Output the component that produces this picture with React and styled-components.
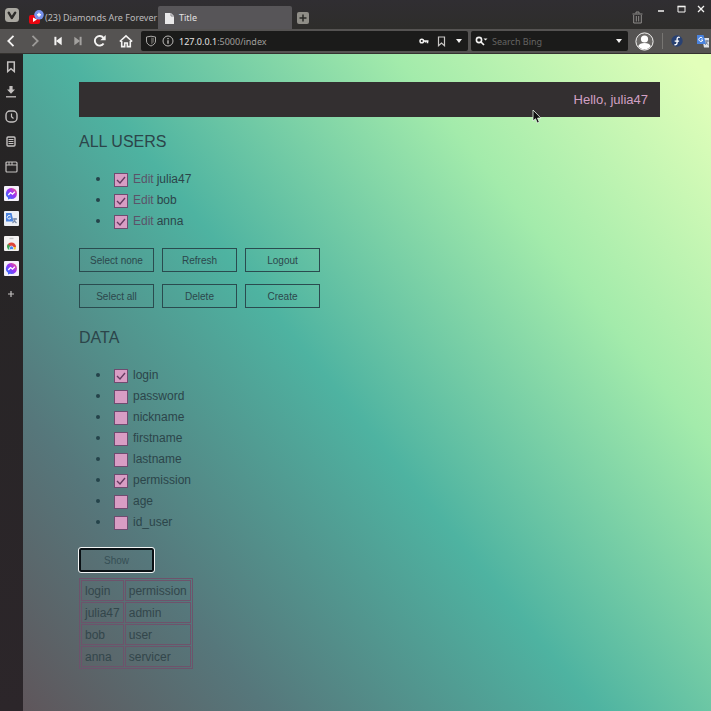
import React, { useState } from "react";
import styled, { createGlobalStyle, css } from "styled-components";

const GlobalStyle = createGlobalStyle`
  *, *::before, *::after { box-sizing: border-box; }
  body { margin: 0; background: #2b292c; }
  button, input { font: inherit; color: inherit; }
`;

const Browser = styled.div`
  display: flex;
  flex-direction: column;
  min-height: 100vh;
  overflow: hidden;
  font-family: "Noto Sans", sans-serif;
  font-size: 9px;
  color: #d8d6d4;
`;

const TabStrip = styled.header`
  display: flex;
  align-items: flex-end;
  height: 29px;
  background: linear-gradient(#302e32, #2e2d2b);
`;

const IconButton = styled.button`
  display: flex;
  flex: none;
  align-items: center;
  justify-content: center;
  width: ${(p) => p.$w || 22}px;
  height: ${(p) => p.$h || 22}px;
  padding: 0;
  border: 0;
  background: none;
  color: ${(p) => p.$color || "#f4f3f2"};
  svg { display: block; flex: none; }
`;

const Tab = styled.button`
  display: flex;
  align-items: center;
  gap: ${(p) => (p.$active ? 4 : 1)}px;
  width: 134px;
  height: 23px;
  padding: 0 ${(p) => (p.$active ? 6 : 5)}px;
  border: 0;
  border-radius: 2px 2px 0 0;
  background: ${(p) => (p.$active ? "#575558" : "transparent")};
  color: ${(p) => (p.$active ? "#e3e1e2" : "#bdbbbc")};
  white-space: nowrap;
  text-align: left;
  svg { flex: none; }
`;

const TabTitle = styled.span`
  flex: 1;
`;

const StripEnd = styled.div`
  display: flex;
  align-self: stretch;
  margin-left: auto;
  align-items: flex-start;
`;

const TrashSlot = styled.div`
  padding: 6px 3px 0 0;
`;

const Toolbar = styled.nav`
  display: flex;
  align-items: center;
  height: 25px;
  border-bottom: 1px solid #34322f;
  background: #555352;
`;

const NavGroup = styled.div`
  display: flex;
  flex: none;
  width: 141px;
`;

const Field = styled.div`
  display: flex;
  align-items: center;
  height: 20px;
  border-radius: 2px;
  background: #1b1b1a;
  min-width: 0;
  ${(p) => (p.$wide ? css`flex: 1;` : css`flex: none; width: 157px; margin-left: 3px;`)}
`;

const FieldInput = styled.input`
  flex: 1;
  min-width: 0;
  padding: 0 0 0 1px;
  border: 0;
  outline: 0;
  background: none;
  color: #a9a7a5;
  &::placeholder { color: #656462; opacity: 1; }
`;

const Address = styled.button`
  flex: 1;
  padding: 0 0 0 4px;
  border: 0;
  background: none;
  text-align: left;
  font-size: 9px;
  color: #a09e9b;
  b { font-weight: 400; color: #e6e4e2; }
`;

const Extensions = styled.div`
  display: flex;
  flex: none;
  align-items: center;
  width: 83px;
  overflow: hidden;
`;

const Divider = styled.span`
  flex: none;
  width: 1px;
  height: 16px;
  margin: 0 1px 0 2px;
  background: #777572;
`;

const Main = styled.div`
  display: flex;
  flex: 1;
`;

const Sidebar = styled.aside`
  display: flex;
  flex: none;
  flex-direction: column;
  gap: 2px;
  width: 23px;
  background: linear-gradient(#252424, #2c262a);
`;

const PanelGroup = styled.div`
  display: flex;
  flex-direction: column;
`;

const Page = styled.main`
  flex: 1;
  min-width: 0;
  padding: 28px 51px 40px 56px;
  font-family: "Liberation Sans", Arial, sans-serif;
  font-size: 12px;
  color: #2c454a;
  background: linear-gradient(51deg, #5f565b 0%, #56777b 20%, #4eb3a1 47%, #a3ebab 74%, #e2ffba 98%);
`;

const Greeting = styled.div`
  display: flex;
  align-items: center;
  justify-content: flex-end;
  height: 35px;
  padding: 0 12px;
  background: #332f30;
  color: #d2a0c4;
  font-size: 13px;
`;

const Heading = styled.h1`
  margin: ${(p) => p.$top}px 0 0;
  font-size: 16px;
  font-weight: 400;
  line-height: 20px;
`;

const CheckList = styled.ul`
  margin: 16px 0;
  padding: 0 0 0 35px;
  list-style: none;
`;

const CheckItem = styled.li`
  display: flex;
  align-items: center;
  height: 21px;
  &::before {
    content: "";
    width: 4px;
    height: 4px;
    margin-left: -18px;
    margin-right: 14px;
    border-radius: 50%;
    background: #24434a;
  }
`;

const Box = styled.input`
  appearance: none;
  flex: none;
  width: 14px;
  height: 14px;
  margin: 2px 5px 0 0;
  border: 1px solid #6f4b70;
  background: #d89dc4;
  &:checked {
    background: #d89dc4 url("data:image/svg+xml,%3Csvg xmlns='http://www.w3.org/2000/svg' viewBox='0 0 12 12'%3E%3Cpath d='M2 6l3 3 5-6' fill='none' stroke='%23663c62' stroke-width='1.4'/%3E%3C/svg%3E");
  }
`;

const EditLink = styled.a`
  margin-right: 3px;
  color: #5b5369;
  text-decoration: none;
`;

const Actions = styled.div`
  display: grid;
  grid-template-columns: repeat(3, 75px);
  gap: 12px 8px;
  padding-top: 1px;
`;

const ActionButton = styled.button`
  display: block;
  width: 75px;
  height: 24px;
  padding: 0;
  border: 1px solid #2a4b4f;
  background: none;
  color: #2c474c;
  font-size: 10px;
  ${(p) => p.$focused && css`
    border: 2px solid #0a1014;
    border-radius: 2px;
    outline: 1px solid #f3f5f5;
    color: #364f55;
  `}
`;

const ResultTable = styled.table`
  margin-top: 6px;
  border: 1px solid #6d536b;
  border-spacing: 1px;
  color: #33464b;
  th, td {
    height: 21px;
    padding: 0 3px;
    border: 1px solid #6d536b;
    font-weight: 400;
    text-align: left;
  }
`;

const Pointer = styled.svg`
  position: absolute;
  left: 532px;
  top: 109px;
`;

const Svg = ({ w = 14, h = w, vb = `0 0 ${w} ${h}`, children, ...rest }) => (
  <svg width={w} height={h} viewBox={vb} fill="none" stroke="currentColor" strokeWidth="1.4" aria-hidden="true" {...rest}>
    {children}
  </svg>
);

const Vivaldi = () => (
  <Svg>
    <rect width="14" height="14" rx="3.5" fill="#aaa8a1" stroke="none" />
    <path d="M3.7 4.7l3.1 5.3 3.4-5.3" stroke="#2d2c2a" strokeWidth="2.4" strokeLinecap="round" strokeLinejoin="round" />
  </Svg>
);
const YouTube = () => (
  <Svg w={15} h={16} stroke="none">
    <rect x="0" y="5" width="11" height="9" rx="2" fill="#e80510" />
    <path d="M4 7.5l4 2-4 2.500z" fill="#fff" />
    <circle cx="10" cy="4.800" r="4.8" fill="#7893ee" />
    <path d="M8 4.800h4M10 2.800v4" stroke="#fff" />
  </Svg>
);
const FileIcon = () => (
  <Svg w={11} h={12} stroke="none">
    <path d="M1 1h6l3 3v8H1z" fill="#e9e8e9" />
    <path d="M7 1v3h3" stroke="#88868a" strokeWidth="1" />
  </Svg>
);
const PlusTab = () => (
  <Svg w={12}>
    <rect width="12" height="12" rx="2" fill="#8f8d87" stroke="none" />
    <path d="M6 2.5v7M2.5 6h7" stroke="#292826" strokeWidth="1.5" />
  </Svg>
);
const Trash = () => (
  <Svg w={11} h={13}>
    <path d="M.5 3h10M4 2.500V1h3v1.500M1.700 4v8h7.600V4M4.300 5v5.500M6.700 5v5.500" strokeWidth="1" />
  </Svg>
);
const Back = () => <Svg w={12}><path d="M8.5 .8L3.300 6l5.200 5.200" strokeWidth="1.8" /></Svg>;
const Forward = () => <Svg w={12}><path d="M3.5 .8L8.700 6l-5.200 5.200" strokeWidth="1.8" /></Svg>;
const Rewind = () => <Svg w={8} h={10}><path d="M1.4 .8v8.400" strokeWidth="2" /><path d="M7.7 .8v8.400L2 5z" fill="currentColor" stroke="none" /></Svg>;
const FastForward = () => <Svg w={8} h={10}><path d="M6.600 .8v8.400" strokeWidth="2" /><path d="M.3 .8v8.400L6 5z" fill="currentColor" stroke="none" /></Svg>;
const Reload = () => <Svg w={14}><path d="M10.6 9.5A4.8 4.8 0 1 1 10.4 3.8" strokeWidth="1.9" /><path d="M12.7 1v5.300H7.300z" fill="currentColor" stroke="none" /></Svg>;
const Home = () => <Svg w={14}><path d="M.8 7.500L7 1.800l6.200 5.700M2.700 7v5.600h3V9h2.600v3.600h3V7" strokeWidth="1.6" /></Svg>;
const Shield = () => <Svg w={12}><path d="M1.500 2l4.500-.8 4.500.8v4c0 2.500-2 4-4.500 5-2.500-1-4.500-2.500-4.500-5z" strokeWidth="1" /><path d="M6 2.500l3 .6v3c0 1.600-1.300 2.600-3 3.400z" fill="#555451" stroke="none" /></Svg>;
const Info = () => <Svg w={12}><circle cx="6" cy="6" r="5" strokeWidth="1" /><path d="M6 5.200v3.600M6 2.900v1.300" strokeWidth="1.400" /></Svg>;
const Key = () => <Svg w={10} h={8}><circle cx="2.800" cy="4" r="1.800" strokeWidth="1.500" /><path d="M4.500 4H9.500M8.500 4v2.300M6.500 4v1.500" strokeWidth="1.500" /></Svg>;
const Bookmark = () => <Svg w={9} h={11}><path d="M1.500 1h6v8.700L4.500 7l-3 2.700z" strokeWidth="1.200" /></Svg>;
const BookmarkPanel = () => <Svg w={10} h={12}><path d="M1.700 1h6.600v9.500L5 7.700l-3.300 2.800z" strokeWidth="1.500" /></Svg>;
const Caret = () => <Svg w={6} h={4}><path d="M0 0h6L3 4z" fill="currentColor" stroke="none" /></Svg>;
const SearchIcon = () => <Svg w={13} h={10}><circle cx="4" cy="4" r="2.600" strokeWidth="1.600" /><path d="M6 6l3 3" strokeWidth="1.700" /><path d="M8.500 2.500h4l-2 2z" fill="currentColor" stroke="none" /></Svg>;
const Avatar = () => (
  <Svg w={19}>
    <circle cx="9.500" cy="9.500" r="8.600" strokeWidth="1" fill="#6b6967" />
    <circle cx="9.500" cy="7" r="3.600" fill="#fff" stroke="none" />
    <path d="M3.200 14.300c1-2.400 3-3.300 6.300-3.300s5.300.9 6.300 3.300a8 8 0 0 1-12.600 0z" fill="#fff" stroke="none" />
  </Svg>
);
const Fedora = () => (
  <Svg w={12}>
    <circle cx="6" cy="6" r="5.700" fill="#294172" stroke="none" />
    <path d="M8.800 2.500C7 1.700 6.200 2.700 6.100 4v3.600C6 9.500 4.700 10 3.400 9.600M3.700 6.100h4.400" stroke="#fff" strokeWidth="1.300" />
  </Svg>
);
const Translate = () => (
  <Svg w={14} stroke="none">
    <path d="M6 4h7v9.500H8z" fill="#dfe3ea" />
    <path d="M1 1h6.500l2.500 9H1z" fill="#4a83df" />
    <path d="M6.500 4.300A2 2 0 1 0 6.800 6H5" stroke="#fff" strokeWidth="1" />
    <path d="M9 7h4M11 6v1c0 2-1 3-2 4M10 8c.5 1.500 1.500 2.300 2.500 3" stroke="#65758e" strokeWidth=".9" />
  </Svg>
);
const Download = () => <Svg w={12} h={13}><path d="M1 11.800h10" strokeWidth="1.300" /><path d="M4.400 1h3.200v3.500H10L6 8.700 2 4.500h2.400z" fill="currentColor" stroke="none" /></Svg>;
const Clock = () => <Svg w={13}><rect x="1" y="1" width="11" height="11" rx="4" strokeWidth="1.400" /><path d="M6.500 3.500v3.200l2 1.800" strokeWidth="1.200" /></Svg>;
const Notes = () => <Svg w={10} h={11}><rect x="1" y="1" width="8" height="9" rx="1" strokeWidth="1.400" /><path d="M2.500 3.500h5M2.500 5.500h5M2.500 7.500h5" strokeWidth="1" /></Svg>;
const WindowIcon = () => <Svg w={13} h={12}><rect x="1" y="1" width="11" height="10" rx="1" strokeWidth="1.200" /><path d="M1 4h11M4 1v3M7 1v3" strokeWidth="1" /></Svg>;
const Messenger = () => (
  <Svg w={15} stroke="none">
    <defs>
      <linearGradient id="messenger" x1="0" y1="1" x2="1" y2="0">
        <stop stopColor="#167dff" /><stop offset=".55" stopColor="#9b32f5" /><stop offset="1" stopColor="#ff5a78" />
      </linearGradient>
    </defs>
    <rect width="15" height="15" rx="1" fill="#f5f1fa" />
    <path d="M7.500 2a5.500 5.500 0 0 1 0 11l-1.500-.2L4 13.500v-1.700A5.500 5.500 0 0 1 7.500 2z" fill="url(#messenger)" />
    <path d="M4.300 9l2.200-2.400 2 1.500 2.300-2.300" stroke="#fff" strokeWidth="1.300" />
  </Svg>
);
const TranslateTile = () => (
  <Svg w={15} stroke="none">
    <rect width="15" height="15" rx="1" fill="#eceff5" />
    <path d="M2 2h5.500l2 8.500H2z" fill="#4a83df" />
    <path d="M6.500 5A1.800 1.800 0 1 0 6.800 7H5.300" stroke="#fff" strokeWidth=".9" />
    <path d="M8.500 8h4.500M11 7v1c0 2-1 3-2.500 4M10 9c.5 1.500 1.500 2.300 2.500 3" stroke="#7b8dab" />
  </Svg>
);
const ChromeTile = () => (
  <Svg w={15} stroke="none">
    <rect width="15" height="15" rx="1" fill="#f3f1f1" />
    <path d="M5.500 2.500h4" stroke="#c5c5c5" />
    <path d="M3 11a4.500 4.500 0 0 1 9 0z" fill="#de4336" />
    <path d="M3 11c0-1.500.5-2.400 1-3l3 3v2.500H4z" fill="#39a657" />
    <path d="M8 13.500V11h4l-.5 2.500z" fill="#f5c933" />
    <path d="M5.500 12a2 2 0 0 1 4 0v1.500h-4z" fill="#4285f4" stroke="#fff" strokeWidth=".6" />
  </Svg>
);
const Plus = () => <Svg w={8}><path d="M4 1v6M1 4h6" strokeWidth="1.200" /></Svg>;
const Minimize = () => <Svg w={8}><path d="M1 6h6" strokeWidth="1.500" /></Svg>;
const Maximize = () => <Svg w={9} h={8}><path d="M1 1.500h7v5.500H1z" strokeWidth="1" /><path d="M.5 1.500h8" strokeWidth="1.600" /></Svg>;
const Close = () => <Svg w={8}><path d="M1 1l6 6M7 1L1 7" strokeWidth="1.300" /></Svg>;

const panelGroups = [
  [["Bookmarks", BookmarkPanel], ["Downloads", Download], ["History", Clock], ["Notes", Notes], ["Window", WindowIcon]],
  [["Messenger", Messenger], ["Translate", TranslateTile], ["Web store", ChromeTile], ["Messenger chats", Messenger], ["Add panel", Plus]],
];
const users = ["julia47", "bob", "anna"];
const fields = ["login", "password", "nickname", "firstname", "lastname", "permission", "age", "id_user"];
const rows = [["julia47", "admin"], ["bob", "user"], ["anna", "servicer"]];

function CheckRow({ id, name, editable, checked, onToggle }) {
  return (
    <CheckItem>
      <Box type="checkbox" id={id} checked={checked} onChange={onToggle} />
      {editable && <EditLink href="#edit">Edit</EditLink>}
      <label htmlFor={id}>{name}</label>
    </CheckItem>
  );
}

export default function App() {
  const [pickedUsers, setPickedUsers] = useState(users);
  const [pickedFields, setPickedFields] = useState(["login", "permission"]);
  const toggle = (list, item) => (list.includes(item) ? list.filter((x) => x !== item) : [...list, item]);

  return (
    <>
      <GlobalStyle />
      <Browser>
        <TabStrip>
          <IconButton $w={24} $h={29} aria-label="Menu"><Vivaldi /></IconButton>
          <Tab><YouTube /><TabTitle>(23) Diamonds Are Forever</TabTitle></Tab>
          <Tab $active><FileIcon /><TabTitle>Title</TabTitle></Tab>
          <IconButton $w={22} $h={23} aria-label="New tab"><PlusTab /></IconButton>
          <StripEnd>
            <TrashSlot><IconButton $color="#8f8d8b" aria-label="Closed tabs"><Trash /></IconButton></TrashSlot>
            <IconButton $w={20} $h={17} aria-label="Minimize"><Minimize /></IconButton>
            <IconButton $w={20} $h={17} aria-label="Maximize"><Maximize /></IconButton>
            <IconButton $w={20} $h={17} aria-label="Close"><Close /></IconButton>
          </StripEnd>
        </TabStrip>

        <Toolbar>
          <NavGroup>
            <IconButton $w={22} aria-label="Back"><Back /></IconButton>
            <IconButton $w={26} $color="#9c9a98" aria-label="Forward"><Forward /></IconButton>
            <IconButton $w={20} aria-label="Rewind"><Rewind /></IconButton>
            <IconButton $w={20} $color="#a3a19f" aria-label="Fast forward"><FastForward /></IconButton>
            <IconButton $w={24} aria-label="Reload"><Reload /></IconButton>
            <IconButton $w={28} aria-label="Home"><Home /></IconButton>
          </NavGroup>
          <Field $wide>
            <IconButton $w={20} $color="#aaa8a6" aria-label="Blocker"><Shield /></IconButton>
            <IconButton $w={14} $color="#bab8b6" aria-label="Site information"><Info /></IconButton>
            <Address><b>127.0.0.1</b>:5000/index</Address>
            <IconButton $w={16} aria-label="Passwords"><Key /></IconButton>
            <IconButton $w={18} $color="#c9c7c5" aria-label="Bookmark page"><Bookmark /></IconButton>
            <IconButton $w={18} aria-label="Address history"><Caret /></IconButton>
          </Field>
          <Field>
            <IconButton $w={20} aria-label="Search engine"><SearchIcon /></IconButton>
            <FieldInput aria-label="Search Bing" placeholder="Search Bing" />
            <IconButton $w={18} aria-label="Search history"><Caret /></IconButton>
          </Field>
          <Extensions>
            <IconButton $w={32} aria-label="Profile"><Avatar /></IconButton>
            <Divider />
            <IconButton $w={26} aria-label="Fedora"><Fedora /></IconButton>
            <IconButton $w={26} aria-label="Translate page"><Translate /></IconButton>
          </Extensions>
        </Toolbar>

        <Main>
          <Sidebar>
            {panelGroups.map((group) => (
              <PanelGroup key={group[0][0]}>
                {group.map(([name, Icon]) => (
                  <IconButton key={name} $w={22} $h={25} $color="#c4c1c0" aria-label={name}><Icon /></IconButton>
                ))}
              </PanelGroup>
            ))}
          </Sidebar>
          <Page>
            <Greeting>Hello, julia47</Greeting>

            <Heading $top={15}>ALL USERS</Heading>
            <CheckList>
              {users.map((name) => (
                <CheckRow
                  key={name}
                  id={`user-${name}`}
                  name={name}
                  editable
                  checked={pickedUsers.includes(name)}
                  onToggle={() => setPickedUsers(toggle(pickedUsers, name))}
                />
              ))}
            </CheckList>
            <Actions>
              <ActionButton onClick={() => setPickedUsers([])}>Select none</ActionButton>
              <ActionButton>Refresh</ActionButton>
              <ActionButton>Logout</ActionButton>
              <ActionButton onClick={() => setPickedUsers(users)}>Select all</ActionButton>
              <ActionButton>Delete</ActionButton>
              <ActionButton>Create</ActionButton>
            </Actions>

            <Heading $top={20}>DATA</Heading>
            <CheckList>
              {fields.map((name) => (
                <CheckRow
                  key={name}
                  id={`field-${name}`}
                  name={name}
                  checked={pickedFields.includes(name)}
                  onToggle={() => setPickedFields(toggle(pickedFields, name))}
                />
              ))}
            </CheckList>
            <ActionButton $focused>Show</ActionButton>
            <ResultTable>
              <thead>
                <tr><th scope="col">login</th><th scope="col">permission</th></tr>
              </thead>
              <tbody>
                {rows.map(([login, permission]) => (
                  <tr key={login}><td>{login}</td><td>{permission}</td></tr>
                ))}
              </tbody>
            </ResultTable>
          </Page>
        </Main>
      </Browser>
      <Pointer width="10" height="15" viewBox="0 0 10 15" aria-hidden="true">
        <path d="M1 1v11l2.500-2.300L5.300 14l2-.9-1.800-4H9z" fill="#111" stroke="#e8f5e8" strokeWidth=".8" />
      </Pointer>
    </>
  );
}
